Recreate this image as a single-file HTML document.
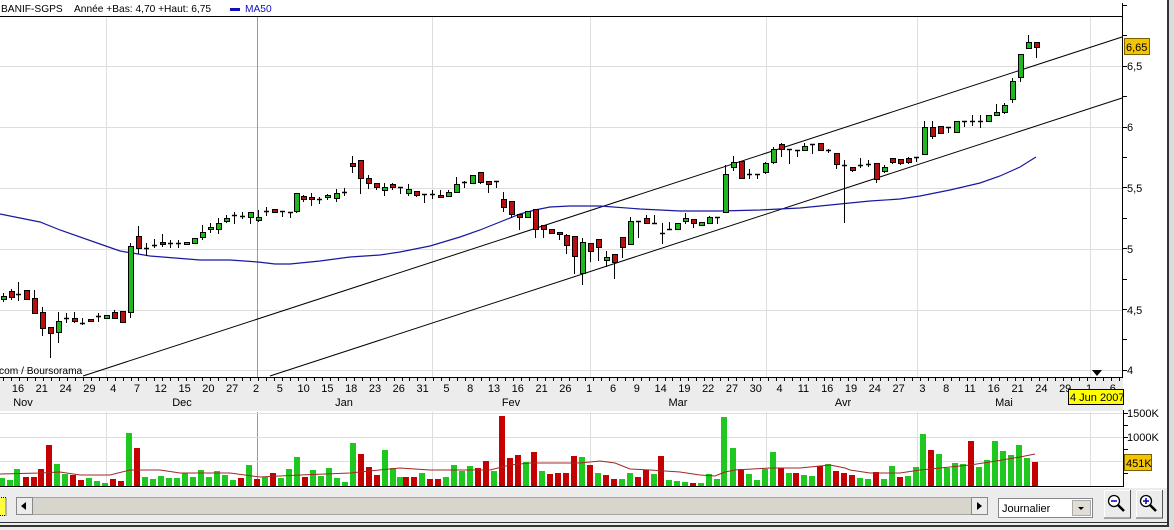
<!DOCTYPE html>
<html><head><meta charset="utf-8"><style>
html,body{margin:0;padding:0;background:#ececec;width:1174px;height:530px;overflow:hidden}
svg{display:block}
text{font-family:"Liberation Sans",Arial,sans-serif;font-size:11px}
.sm{font-size:10.2px}
</style></head><body>
<svg id="s" width="1174" height="530" xmlns="http://www.w3.org/2000/svg"></svg>
<script>
var s='';
function A(x){s+=x;}
A('<rect x="0" y="0" width="1174" height="530" fill="#ececec"/>');
A('<rect x="0" y="0" width="1168" height="488" fill="#fff"/>');
A('<rect x="0" y="378" width="1123" height="33" fill="#ececec"/>');
A('<rect x="1167" y="0" width="2" height="527" fill="#333"/>');
A('<rect x="1169" y="0" width="5" height="530" fill="#dcdcdc"/>');
A('<rect x="0" y="522" width="1169" height="1" fill="#333"/><rect x="0" y="525" width="1169" height="2" fill="#333"/>');
[66,127,188,249,310,370].forEach(function(y){A('<line x1="0" y1="'+(y+.5)+'" x2="1122" y2="'+(y+.5)+'" stroke="#dedede"/>');});
[106,432,590,766,917,1090].forEach(function(x){A('<line x1="'+(x+.5)+'" y1="17" x2="'+(x+.5)+'" y2="377" stroke="#dedede"/><line x1="'+(x+.5)+'" y1="412" x2="'+(x+.5)+'" y2="486" stroke="#dedede"/>');});
A('<line x1="257.5" y1="17" x2="257.5" y2="377" stroke="#999"/><line x1="257.5" y1="412" x2="257.5" y2="486" stroke="#999"/>');
[413,437,461].forEach(function(y){A('<line x1="0" y1="'+(y+.5)+'" x2="1123" y2="'+(y+.5)+'" stroke="#dedede"/>');});
A('<line x1="0" y1="16.5" x2="1123" y2="16.5" stroke="#000"/>');
A('<line x1="1122.5" y1="3" x2="1122.5" y2="378" stroke="#000"/>');
A('<line x1="0" y1="377.5" x2="1123" y2="377.5" stroke="#000"/>');
for(var x=3;x<1122;x+=7.97){A('<line x1="'+(Math.round(x)+.5)+'" y1="378" x2="'+(Math.round(x)+.5)+'" y2="381" stroke="#000"/>');}
A('<line x1="1123.5" y1="410" x2="1123.5" y2="487" stroke="#000"/>');
A('<line x1="0" y1="486.5" x2="1124" y2="486.5" stroke="#000"/>');
for(var y=5;y<372;y+=30.4){A('<line x1="1122" y1="'+(Math.round(y)+.5)+'" x2="1127" y2="'+(Math.round(y)+.5)+'" stroke="#000"/>');}
[['6,5',66],['6',127],['5,5',188],['5',249],['4,5',310],['4',370]].forEach(function(a){A('<text x="1127" y="'+(a[1]+4)+'">'+a[0]+'</text>');});
A('<rect x="1124.5" y="38.5" width="25" height="16" fill="#f5c400" stroke="#7a6000"/><text x="1126" y="51">6,65</text>');
[413,425,437,449,461,473].forEach(function(y){A('<line x1="1123" y1="'+(y+.5)+'" x2="1128" y2="'+(y+.5)+'" stroke="#000"/>');});
A('<text x="1127" y="417">1500K</text><text x="1127" y="441">1000K</text>');
A('<rect x="1124.5" y="454.5" width="27" height="16" fill="#f5c400" stroke="#7a6000"/><text x="1126" y="467">451K</text>');
A('<text class="sm" x="1" y="12">BANIF-SGPS</text><text class="sm" x="74" y="12">Année +Bas: 4,70 +Haut: 6,75</text>');
A('<rect x="230" y="8" width="10" height="3" fill="#1010c0"/><text class="sm" x="245" y="12" fill="#1010c0">MA50</text>');
A('<text class="sm" x="-1" y="374">com / Boursorama</text>');
A('<line x1="83" y1="376" x2="1122" y2="37" stroke="#000"/>');
A('<line x1="270" y1="376" x2="1122" y2="98" stroke="#000"/>');
A('<polyline fill="none" stroke="#1818a0" stroke-width="1.2" points="0,214 40,222 60,230 100,244 120,251 138,254 150,256 175,258 200,260 230,260 258,262 275,264 290,264 320,261 350,257 380,255 400,252 430,246 460,237 480,230 500,222 520,214 535,210 550,207 570,206 600,206 640,209 680,211 720,211 760,210 800,208 830,205 870,201 900,199 920,196 950,190 980,183 1000,176 1020,167 1036,157"/>');
var C=[[3,'g',296,299,293,301],[11,'r',291,297,289,299],[18,'d',294,294,282,300],[26,'r',290,299,290,299],[34,'r',298,313,290,313],[42,'r',312,328,307,335],[50,'r',327,333,327,357],[58,'g',321,332,312,342],[66,'d',318,318,313,322],[74,'r',318,321,312,322],[82,'d',323,323,318,324],[90,'r',319,321,319,321],[98,'d',316,316,313,321],[106,'g',315,318,315,318],[114,'r',312,318,310,318],[122,'r',311,322,311,322],[130,'g',246,312,243,317],[138,'r',236,248,226,253],[146,'d',248,248,243,255],[154,'d',245,245,239,247],[162,'r',242,244,234,246],[170,'d',243,243,240,247],[178,'d',243,243,240,247],[186,'g',242,244,242,244],[194,'g',238,243,238,243],[202,'g',232,237,225,239],[210,'g',227,229,223,232],[218,'g',223,229,218,233],[226,'g',218,221,215,222],[234,'d',215,215,212,223],[242,'d',216,216,212,218],[250,'g',212,217,212,223],[258,'g',217,220,210,221],[266,'d',211,211,207,215],[274,'r',209,212,209,212],[282,'d',211,211,211,216],[290,'d',212,212,212,217],[296,'g',193,211,193,212],[303,'r',196,199,195,201],[311,'r',197,199,193,205],[319,'d',199,199,197,203],[327,'g',195,197,194,199],[336,'g',193,198,189,201],[344,'d',192,192,188,195],[352,'r',163,166,156,172],[360,'r',160,178,160,193],[368,'r',178,183,175,188],[376,'r',183,187,183,189],[384,'g',187,190,183,195],[392,'r',184,187,183,189],[400,'d',187,187,187,193],[408,'g',189,193,184,195],[416,'r',191,195,191,196],[424,'d',194,194,194,202],[432,'d',194,194,190,198],[440,'r',195,197,190,197],[448,'g',192,196,190,196],[456,'g',184,192,177,192],[464,'d',182,182,181,187],[472,'g',175,183,175,183],[480,'r',172,182,172,183],[488,'r',181,184,181,192],[496,'d',181,181,181,187],[503,'r',199,207,192,211],[511,'r',201,214,201,217],[519,'r',214,217,214,229],[527,'g',211,217,211,217],[535,'r',209,229,209,237],[543,'r',225,229,225,237],[551,'r',229,233,229,233],[559,'r',232,234,232,239],[566,'r',235,245,234,253],[574,'r',236,256,236,273],[582,'g',242,273,238,284],[590,'r',243,251,243,261],[598,'r',239,247,239,260],[606,'g',257,260,251,266],[614,'r',254,262,254,278],[622,'r',237,247,237,257],[630,'g',221,244,217,244],[638,'d',221,221,221,237],[646,'r',218,223,215,223],[654,'d',223,223,215,223],[662,'d',233,233,223,243],[669,'d',229,229,222,229],[677,'g',223,229,223,229],[685,'g',218,221,213,223],[693,'r',219,223,219,227],[701,'g',222,225,222,225],[709,'g',217,223,216,223],[717,'d',217,217,217,223],[725,'g',174,212,165,212],[733,'g',162,167,156,170],[741,'r',161,178,161,178],[749,'d',174,174,169,178],[757,'d',174,174,174,178],[765,'g',163,172,162,173],[773,'g',149,162,147,163],[781,'r',144,149,143,156],[789,'d',149,149,149,163],[797,'d',150,150,150,156],[804,'g',146,150,143,150],[812,'d',144,144,144,153],[820,'r',143,150,143,150],[828,'d',150,150,149,152],[836,'r',153,164,153,168],[844,'d',165,165,160,222],[852,'r',167,170,167,171],[860,'d',165,165,158,167],[868,'d',164,164,160,166],[876,'r',163,179,163,182],[884,'g',167,171,165,172],[892,'r',158,162,158,163],[900,'r',159,163,159,164],[908,'r',158,162,157,163],[916,'d',157,157,157,161],[924,'g',127,154,121,154],[932,'r',127,136,121,138],[940,'r',126,133,126,133],[948,'d',127,127,127,132],[956,'g',121,132,121,132],[964,'d',121,121,121,126],[972,'d',121,121,115,125],[980,'d',121,121,115,127],[988,'g',115,121,115,121],[996,'g',112,115,104,115],[1004,'g',105,112,103,113],[1012,'g',81,99,78,102],[1020,'g',54,77,54,81],[1028,'g',42,48,35,48],[1036,'r',42,47,42,57]];
C.forEach(function(c){var x=c[0];
A('<line x1="'+(x+.5)+'" y1="'+c[4]+'" x2="'+(x+.5)+'" y2="'+(c[5]+1)+'" stroke="#000"/>');
if(c[1]=='d'){A('<line x1="'+(x-2)+'" y1="'+(c[2]+.5)+'" x2="'+(x+3)+'" y2="'+(c[2]+.5)+'" stroke="#000" stroke-width="1.5"/>');}
else{var h=Math.max(c[3]-c[2],2);A('<rect x="'+(x-2)+'.5" y="'+(c[2]+.5)+'" width="5" height="'+h+'" fill="'+(c[1]=='g'?'#20b820':'#b81010')+'" stroke="#000"/>');}
});
var V=[[2,'g',478],[10,'g',480],[17,'g',469],[26,'r',477],[34,'r',477],[41,'r',469],[49,'r',445],[57,'g',464],[65,'g',474],[73,'r',475],[81,'r',480],[89,'g',478],[97,'g',481],[105,'g',483],[113,'r',479],[121,'r',481],[129,'g',433],[137,'r',448],[145,'g',477],[153,'g',479],[161,'g',476],[169,'g',478],[177,'g',478],[185,'g',473],[193,'g',477],[201,'g',470],[209,'g',477],[217,'g',471],[225,'g',475],[233,'g',480],[241,'r',478],[249,'g',465],[257,'r',479],[265,'g',477],[273,'r',473],[281,'g',478],[289,'g',469],[297,'g',457],[305,'r',477],[313,'g',470],[321,'g',476],[329,'g',468],[337,'g',478],[345,'g',482],[353,'g',443],[361,'r',454],[369,'r',467],[377,'r',475],[385,'g',450],[393,'g',468],[400,'g',477],[406,'r',477],[414,'r',477],[422,'g',473],[430,'r',479],[438,'r',479],[446,'g',477],[454,'g',465],[462,'g',471],[470,'g',466],[478,'r',468],[486,'r',461],[494,'g',471],[502,'r',416],[510,'r',458],[518,'r',455],[526,'g',462],[534,'r',452],[542,'g',471],[550,'r',474],[558,'r',473],[566,'r',473],[574,'r',456],[582,'g',457],[590,'r',465],[598,'g',473],[606,'r',475],[614,'r',479],[622,'g',479],[630,'g',473],[638,'r',477],[646,'r',470],[654,'g',474],[661,'r',456],[669,'g',480],[677,'g',481],[685,'g',482],[693,'r',483],[701,'g',483],[709,'g',474],[717,'g',479],[724,'g',417],[733,'g',448],[741,'r',469],[749,'g',474],[757,'g',480],[765,'g',469],[773,'g',452],[781,'r',468],[789,'g',473],[796,'r',473],[804,'g',475],[812,'g',476],[820,'r',466],[828,'g',464],[836,'r',471],[844,'r',473],[852,'r',475],[860,'g',478],[868,'g',479],[876,'r',472],[884,'g',479],[892,'g',466],[900,'r',477],[908,'g',476],[916,'g',467],[923,'g',434],[931,'r',450],[939,'g',454],[947,'g',468],[955,'g',463],[963,'g',464],[971,'r',441],[979,'g',467],[987,'g',460],[995,'g',441],[1003,'g',451],[1011,'g',455],[1019,'g',445],[1027,'g',458],[1035,'r',462]];
V.forEach(function(v){A('<rect x="'+(v[0]-3)+'" y="'+v[2]+'" width="6" height="'+(486-v[2])+'" fill="'+(v[1]=='g'?'#1ec81e':'#c40000')+'"/>');});
A('<polyline fill="none" stroke="#a02828" points="0,474 40,473 60,472 80,475 110,475 130,470 160,470 180,473 230,473 260,477 300,475 350,473 400,468 430,470 460,470 490,470 510,465 530,463 580,463 600,461 615,463 630,469 650,470 680,472 700,475 715,476 725,472 735,470 770,468 800,468 830,465 845,468 850,470 870,473 900,473 920,470 950,467 970,465 990,462 1020,457 1035,454"/>');
var L=[16,21,24,29,4,7,12,15,20,27,2,5,10,15,18,23,26,31,5,8,13,16,21,26,1,6,9,14,19,22,27,30,4,11,16,19,24,27,3,8,11,16,21,24,29,1,6];
L.forEach(function(d,i){A('<text x="'+(18+i*23.8).toFixed(1)+'" y="392" text-anchor="middle">'+d+'</text>');});
[['Nov',23],['Dec',182],['Jan',344],['Fev',511],['Mar',678],['Avr',843],['Mai',1004]].forEach(function(m){A('<text x="'+m[1]+'" y="406" text-anchor="middle">'+m[0]+'</text>');});
A('<path d="M1092 370 L1102 370 L1097 376 Z" fill="#000"/>');
A('<rect x="1068.5" y="389.5" width="55" height="15" fill="#ffff00" stroke="#000"/><text x="1070" y="401">4 Jun 2007</text>');
A('<rect x="-1" y="497.5" width="7" height="18" fill="#ffff40" stroke="#000" stroke-dasharray="1,1"/>');
A('<rect x="32.5" y="497.5" width="939" height="17" fill="#d8d5cc" stroke="#a8a59c"/>');
A('<rect x="16.5" y="497.5" width="16" height="17" fill="#ececec" stroke="#888"/><path d="M21 506 L26 502 L26 510 Z" fill="#000"/>');
A('<rect x="971.5" y="497.5" width="16" height="17" fill="#ececec" stroke="#888"/><path d="M982 506 L977 502 L977 510 Z" fill="#000"/>');
A('<rect x="998.5" y="498.5" width="94" height="19" fill="#fff" stroke="#888"/><text x="1002" y="512" font-size="12">Journalier</text>');
A('<rect x="1072.5" y="500.5" width="18" height="15" fill="#e0ddd4" stroke="#aaa"/><path d="M1078 507 L1084 507 L1081 510 Z" fill="#000"/>');
[1104,1136].forEach(function(bx,k){
A('<rect x="'+(bx+.5)+'" y="490.5" width="26" height="27" fill="#ececec" stroke="#fff"/><path d="M'+(bx+26.5)+' 490 V518 H'+(bx)+'" fill="none" stroke="#555"/>');
var cx=bx+10,cy=501;
A('<circle cx="'+cx+'" cy="'+cy+'" r="5.5" fill="#fff" stroke="#000" stroke-width="1.3"/><line x1="'+(cx+4)+'" y1="'+(cy+4)+'" x2="'+(cx+10)+'" y2="'+(cy+10)+'" stroke="#000" stroke-width="2.5"/>');
A('<line x1="'+(cx-3)+'" y1="'+cy+'" x2="'+(cx+3)+'" y2="'+cy+'" stroke="#0000c0" stroke-width="1.5"/>');
if(k==1)A('<line x1="'+cx+'" y1="'+(cy-3)+'" x2="'+cx+'" y2="'+(cy+3)+'" stroke="#0000c0" stroke-width="1.5"/>');
});
document.getElementById('s').innerHTML=s;
</script>
</body></html>
